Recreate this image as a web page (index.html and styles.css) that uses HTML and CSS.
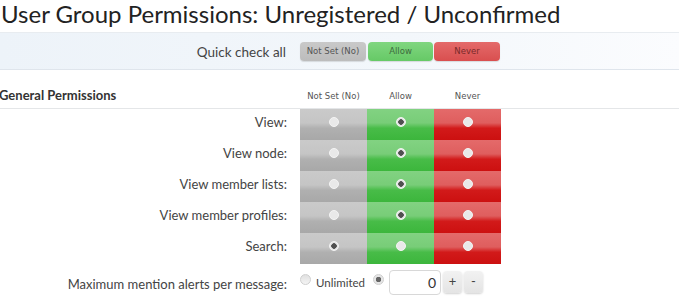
FILE: index.html
```html
<!DOCTYPE html>
<html>
<head>
<meta charset="utf-8">
<link rel="stylesheet" href="styles.css">
</head>
<body>
<h1 class="title">User Group Permissions: Unregistered / Unconfirmed</h1>

<div class="quick">
  <div class="quick-label">Quick check all</div>
  <div class="qbtn qbtn-unset">Not Set (No)</div>
  <div class="qbtn qbtn-allow">Allow</div>
  <div class="qbtn qbtn-never">Never</div>
</div>

<div class="perm-head">
  <div class="section-title">General Permissions</div>
  <div class="col-head">Not Set (No)</div>
  <div class="col-head">Allow</div>
  <div class="col-head">Never</div>
</div>

<div class="perm-row">
  <div class="perm-label">View:</div>
  <div class="cell cell-unset"><span class="radio"></span></div>
  <div class="cell cell-allow"><span class="radio checked"></span></div>
  <div class="cell cell-never"><span class="radio"></span></div>
</div>
<div class="perm-row">
  <div class="perm-label">View node:</div>
  <div class="cell cell-unset"><span class="radio"></span></div>
  <div class="cell cell-allow"><span class="radio checked"></span></div>
  <div class="cell cell-never"><span class="radio"></span></div>
</div>
<div class="perm-row">
  <div class="perm-label">View member lists:</div>
  <div class="cell cell-unset"><span class="radio"></span></div>
  <div class="cell cell-allow"><span class="radio checked"></span></div>
  <div class="cell cell-never"><span class="radio"></span></div>
</div>
<div class="perm-row">
  <div class="perm-label">View member profiles:</div>
  <div class="cell cell-unset"><span class="radio"></span></div>
  <div class="cell cell-allow"><span class="radio checked"></span></div>
  <div class="cell cell-never"><span class="radio"></span></div>
</div>
<div class="perm-row">
  <div class="perm-label">Search:</div>
  <div class="cell cell-unset"><span class="radio checked"></span></div>
  <div class="cell cell-allow"><span class="radio"></span></div>
  <div class="cell cell-never"><span class="radio"></span></div>
</div>

<div class="int-row">
  <div class="perm-label int-label">Maximum mention alerts per message:</div>
  <div class="int-controls">
    <span class="sradio"></span>
    <span class="unlimited">Unlimited</span>
    <span class="sradio sradio-checked"></span>
    <div class="num">0</div>
    <div class="spin">+</div>
    <div class="spin">-</div>
  </div>
</div>
</body>
</html>
```

FILE: styles.css
```css
html, body {
  margin: 0;
  padding: 0;
  background: #ffffff;
  font-family: "Lato", "Liberation Sans", sans-serif;
  color: #444;
  overflow: hidden;
}

.title {
  margin: 0;
  height: 32px;
  padding-left: 1px;
  font-family: "Lato", "Liberation Sans", sans-serif;
  font-weight: normal;
  font-size: 24px;
  line-height: 28px;
  color: #222;
  border-bottom: 1px solid #e8ecf0;
}

.quick {
  display: grid;
  grid-template-columns: 300px 67px 67px 67px;
  align-items: center;
  height: 36px;
  background: linear-gradient(to right, #edf3f9 0%, #f3f7fb 60%, #fbfcfe 100%);
  border-bottom: 1px solid #dfe5ec;
}

.quick-label {
  text-align: right;
  padding-right: 14px;
  font-size: 13.5px;
  color: #444;
  padding-top: 1px;
}

.qbtn {
  height: 19px;
  margin: 0 1px 0 0;
  border-radius: 4px;
  font-family: "DejaVu Sans", sans-serif;
  font-size: 8.5px;
  line-height: 19px;
  text-align: center;
  box-shadow: 0 1px 1px rgba(0,0,0,0.12);
}
.qbtn-unset {
  background: linear-gradient(#c9c9c9, #bcbcbc);
  color: #555;
}
.qbtn-allow {
  margin-left: 1px;
  background: linear-gradient(#80d680, #66c966);
  color: #3d6b3d;
}
.qbtn-never {
  background: linear-gradient(#e46a6a, #d94f4f);
  color: #7a2a2a;
}

.perm-head {
  display: grid;
  grid-template-columns: 300px 67px 67px 67px;
  align-items: end;
  height: 38px;
  border-bottom: 1px solid #e4e6e8;
}
.section-title {
  margin-left: -1px;
  font-weight: bold;
  font-size: 13px;
  color: #333;
  padding-bottom: 5px;
}
.col-head {
  text-align: center;
  font-family: "DejaVu Sans", sans-serif;
  font-size: 8.5px;
  color: #555;
  padding-bottom: 7px;
}

.perm-row {
  display: grid;
  grid-template-columns: 300px 67px 67px 67px;
  height: 31px;
}
.perm-label {
  text-align: right;
  padding-right: 13px;
  font-size: 13px;
  color: #444;
  padding-top: 5px;
}

.cell {
  display: flex;
  justify-content: center;
  padding-top: 8px;
  box-sizing: border-box;
}
.cell-unset {
  background: linear-gradient(#cacaca 0%, #c5c5c5 45%, #b0b0b0 62%, #a8a8a8 100%);
}
.cell-allow {
  background: linear-gradient(#82d282 0%, #78cd78 45%, #48bc48 62%, #3cb63c 100%);
}
.cell-never {
  background: linear-gradient(#e46a6a 0%, #df5e5e 45%, #d21a1a 62%, #cc1010 100%);
}

.radio {
  width: 10px;
  height: 10px;
  border-radius: 50%;
  background: #e9e9e9;
  box-sizing: border-box;
  border: 1px solid #f4f4f4;
}
.radio.checked {
  background: radial-gradient(circle, #505050 0 2.5px, #e6e6e6 3px);
}

.int-row {
  display: grid;
  grid-template-columns: 300px auto;
  height: 36px;
}
.int-label {
  padding-top: 12px;
}
.int-controls {
  display: flex;
  align-items: center;
  padding-top: 2px;
  height: 32px;
}
.sradio {
  width: 11px;
  height: 11px;
  border-radius: 50%;
  box-sizing: border-box;
  border: 1px solid #cfcfcf;
  background: linear-gradient(#e0e0e0, #f4f4f4);
  margin-bottom: 6px;
}
.sradio-checked {
  margin-left: 8px;
  background: radial-gradient(circle, #666 0 2.5px, #e6e6e6 3px);
}
.unlimited {
  margin-left: 5px;
  font-size: 11.5px;
  color: #444;
  padding-top: 1px;
}
.num {
  margin-left: 5px;
  width: 52px;
  height: 25px;
  box-sizing: border-box;
  border: 1px solid #d8d8d8;
  border-radius: 4px;
  text-align: right;
  padding-right: 4px;
  font-size: 14px;
  line-height: 23px;
  color: #333;
  background: #fff;
}
.spin {
  margin-left: 2px;
  width: 19px;
  height: 22px;
  border-radius: 4px;
  background: linear-gradient(#f2f2f2, #e4e4e4);
  box-shadow: 0 1px 2px rgba(0,0,0,0.18);
  text-align: center;
  font-size: 13px;
  line-height: 21px;
  color: #444;
}
```
